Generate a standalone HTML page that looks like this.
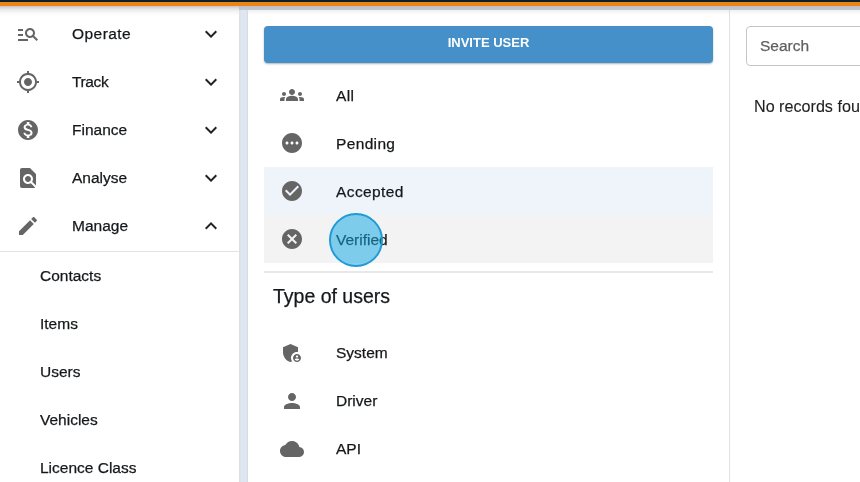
<!DOCTYPE html>
<html><head><meta charset="utf-8">
<style>
*{box-sizing:border-box;margin:0;padding:0}
html,body{width:860px;height:482px;overflow:hidden;background:#dee7f1;font-family:"Liberation Sans",sans-serif;color:#15181b}
.abs{position:absolute}
#topdark{left:0;top:0;width:860px;height:2px;background:#0e2028}
#toporange{left:0;top:2px;width:860px;height:4px;background:#ee8416}
#side{left:0;top:6px;width:239px;height:476px;background:#fff}
#sep{left:0;top:251px;width:239px;height:1px;background:#e3e3e3}
.icon{position:absolute;width:24px;height:24px;fill:#656565}
.chev{position:absolute;width:24px;height:24px;fill:#222}
.st{position:absolute;font-size:15.5px;white-space:nowrap;line-height:20px;will-change:transform;-webkit-text-stroke:0.25px currentColor}
#main{left:248px;top:10px;width:481px;height:472px;background:#fff}
#vline{left:729px;top:6px;width:1px;height:476px;background:#e2e2e2}
#right{left:730px;top:10px;width:130px;height:472px;background:#fff}
#btn{left:264px;top:26px;width:449px;height:37px;background:#4590c8;border-radius:4px;box-shadow:0 1px 2px rgba(0,0,0,.3);color:#fff;font-weight:bold;font-size:13px;text-align:center;line-height:34px;will-change:transform}
#acc{left:264px;top:167px;width:449px;height:48px;background:#eff4fb}
#ver{left:264px;top:215px;width:449px;height:48px;background:#f3f3f3}
#div2{left:264px;top:271px;width:449px;height:2px;background:#e8e8e8}
#search{left:746px;top:26px;width:130px;height:40px;border:1px solid #c6c6c6;border-radius:4px;background:#fff}
#strip{left:239px;top:6px;width:621px;height:4px;background:linear-gradient(#bdc0c7,#c4c7ce)}
#shadow2{left:248px;top:10px;width:612px;height:5px;background:linear-gradient(rgba(0,0,0,.06),rgba(0,0,0,0))}
#shadow{left:0;top:6px;width:239px;height:10px;background:linear-gradient(rgba(0,0,0,.22),rgba(0,0,0,.1) 30%,rgba(0,0,0,.03) 65%,rgba(0,0,0,0))}
#circle{left:329px;top:212.5px;width:54px;height:54px;border-radius:50%;background:rgba(20,168,228,.52);border:2.2px solid #1f9ad6}
</style></head><body>
<div class="abs" id="side"></div>
<div class="abs" style="left:239px;top:6px;width:1px;height:476px;background:#dcdfe4"></div><div class="abs" style="left:240px;top:6px;width:1px;height:476px;background:#dde3ea"></div><div class="abs" style="left:247px;top:6px;width:1px;height:476px;background:#d5dbe4"></div>
<div class="abs" id="main"></div>
<div class="abs" id="right"></div>
<div class="abs" id="vline"></div>
<div class="abs" id="sep"></div>

<!-- sidebar -->
<svg class="icon" style="left:16px;top:22px" viewBox="0 0 24 24"><path d="M7 9H2V7h5v2zm0 3H2v2h5v-2zm13.59 7l-3.83-3.830c-.8.52-1.74.83-2.76.83-2.76 0-5-2.24-5-5s2.240-5 5-5 5 2.24 5 5c0 1.020-.31 1.96-.83 2.75L22 17.59 20.59 19zM17 11c0-1.65-1.35-3-3-3s-3 1.35-3 3 1.35 3 3 3 3-1.35 3-3zM2 19h10v-2H2v2z"/></svg>
<svg class="icon" style="left:16px;top:70px" viewBox="0 0 24 24"><path d="M12 8c-2.21 0-4 1.79-4 4s1.79 4 4 4 4-1.79 4-4-1.79-4-4-4zm8.94 3c-.46-4.17-3.77-7.48-7.94-7.94V1h-2v2.06C6.83 3.52 3.52 6.83 3.06 11H1v2h2.06c.46 4.17 3.77 7.48 7.94 7.94V23h2v-2.06c4.17-.46 7.48-3.77 7.94-7.94H23v-2h-2.06zM12 19c-3.87 0-7-3.13-7-7s3.13-7 7-7 7 3.13 7 7-3.13 7-7 7z"/></svg>
<svg class="icon" style="left:16px;top:118px" viewBox="0 0 24 24"><path d="M12 2C6.48 2 2 6.48 2 12s4.48 10 10 10 10-4.48 10-10S17.52 2 12 2zm1.41 16.09V20h-2.67v-1.93c-1.71-.36-3.16-1.46-3.27-3.4h1.96c.1 1.05.82 1.87 2.65 1.87 1.96 0 2.4-.98 2.4-1.59 0-.83-.44-1.61-2.67-2.14-2.48-.6-4.18-1.62-4.18-3.670 0-1.72 1.39-2.84 3.11-3.21V4h2.67v1.95c1.86.45 2.79 1.86 2.85 3.39H14.3c-.05-1.110-.64-1.87-2.22-1.87-1.5 0-2.4.68-2.4 1.64 0 .84.65 1.39 2.67 1.91s4.18 1.39 4.18 3.91c-.01 1.83-1.38 2.83-3.12 3.16z"/></svg>
<svg class="icon" style="left:16px;top:166px" viewBox="0 0 24 24"><path d="M20 19.59V8l-6-6H6c-1.1 0-1.99.9-1.99 2L4 20c0 1.1.89 2 1.99 2H18c.45 0 .85-.15 1.19-.38l-4.43-4.43c-.8.52-1.74.81-2.76.81-2.76 0-5-2.24-5-5s2.24-5 5-5 5 2.24 5 5c0 1.02-.31 1.96-.83 2.75L20 19.59zM9 13c0 1.66 1.34 3 3 3s3-1.34 3-3-1.34-3-3-3-3 1.34-3 3z"/></svg>
<svg class="icon" style="left:16px;top:214px" viewBox="0 0 24 24"><path d="M3 17.25V21h3.75L17.81 9.94l-3.75-3.75L3 17.25zM20.71 7.04c.39-.39.39-1.02 0-1.41l-2.34-2.34c-.39-.39-1.02-.39-1.41 0l-1.83 1.83 3.75 3.75 1.83-1.83z"/></svg>

<div class="st" style="left:72px;top:24px;letter-spacing:.45px">Operate</div>
<div class="st" style="left:72px;top:72px;letter-spacing:-.35px">Track</div>
<div class="st" style="left:72px;top:120px">Finance</div>
<div class="st" style="left:72px;top:168px">Analyse</div>
<div class="st" style="left:72px;top:216px">Manage</div>

<svg class="chev" style="left:199px;top:22px" viewBox="0 0 24 24"><path d="M16.59 8.59L12 13.17 7.41 8.59 6 10l6 6 6-6z"/></svg>
<svg class="chev" style="left:199px;top:70px" viewBox="0 0 24 24"><path d="M16.59 8.59L12 13.17 7.41 8.59 6 10l6 6 6-6z"/></svg>
<svg class="chev" style="left:199px;top:118px" viewBox="0 0 24 24"><path d="M16.59 8.59L12 13.17 7.41 8.59 6 10l6 6 6-6z"/></svg>
<svg class="chev" style="left:199px;top:166px" viewBox="0 0 24 24"><path d="M16.59 8.59L12 13.17 7.41 8.59 6 10l6 6 6-6z"/></svg>
<svg class="chev" style="left:199px;top:214px" viewBox="0 0 24 24"><path d="M12 8l-6 6 1.41 1.41L12 10.83l4.59 4.58L18 14z"/></svg>

<div class="st" style="left:40px;top:265.5px">Contacts</div>
<div class="st" style="left:40px;top:313.5px">Items</div>
<div class="st" style="left:40px;top:362px">Users</div>
<div class="st" style="left:40px;top:410px">Vehicles</div>
<div class="st" style="left:40px;top:458px">Licence Class</div>

<!-- main -->
<div class="abs" id="btn">INVITE USER</div>
<div class="abs" id="acc"></div>
<div class="abs" id="ver"></div>
<div class="abs" id="div2"></div>

<svg class="icon" style="left:280px;top:83px" viewBox="0 0 24 24"><path d="M12 12.75c1.63 0 3.07.39 4.24.9 1.08.48 1.76 1.56 1.76 2.73V18H6v-1.61c0-1.18.68-2.26 1.76-2.73 1.17-.52 2.61-.91 4.24-.91zM4 13c1.1 0 2-.9 2-2s-.9-2-2-2-2 .9-2 2 .9 2 2 2zm1.13 1.1c-.37-.06-.74-.1-1.13-.1-.99 0-1.93.21-2.78.58C.48 14.9 0 15.62 0 16.43V18h4.5v-1.61c0-.83.23-1.61.63-2.29zM20 13c1.1 0 2-.9 2-2s-.9-2-2-2-2 .9-2 2 .9 2 2 2zm4 3.43c0-.81-.48-1.530-1.22-1.85-.85-.37-1.79-.58-2.78-.58-.39 0-.76.04-1.13.1.4.68.63 1.46.63 2.29V18H24v-1.57zM12 6c1.66 0 3 1.34 3 3s-1.34 3-3 3-3-1.34-3-3 1.34-3 3-3z"/></svg>
<svg class="icon" style="left:280px;top:131px" viewBox="0 0 24 24"><path d="M12 2C6.48 2 2 6.48 2 12s4.48 10 10 10 10-4.48 10-10S17.52 2 12 2zM7 13.5c-.83 0-1.5-.67-1.5-1.5s.67-1.5 1.5-1.5 1.5.67 1.5 1.5-.67 1.5-1.5 1.5zm5 0c-.83 0-1.5-.67-1.5-1.5s.67-1.5 1.5-1.5 1.5.67 1.5 1.5-.67 1.5-1.5 1.5zm5 0c-.83 0-1.5-.67-1.5-1.5s.67-1.5 1.5-1.5 1.5.67 1.5 1.5-.67 1.5-1.5 1.5z"/></svg>
<svg class="icon" style="left:280px;top:179px" viewBox="0 0 24 24"><path d="M12 2C6.48 2 2 6.48 2 12s4.48 10 10 10 10-4.48 10-10S17.52 2 12 2zm-2 15l-5-5 1.41-1.41L10 14.17l7.59-7.59L19 8l-9 9z"/></svg>
<svg class="icon" style="left:280px;top:227px" viewBox="0 0 24 24"><path d="M12 2C6.47 2 2 6.47 2 12s4.47 10 10 10 10-4.47 10-10S17.53 2 12 2zm5 13.59L15.590 17 12 13.41 8.41 17 7 15.59 10.59 12 7 8.41 8.41 7 12 10.59 15.59 7 17 8.41 13.41 12 17 15.59z"/></svg>

<div class="st" style="left:336px;top:85.5px;letter-spacing:.4px">All</div>
<div class="st" style="left:336px;top:133.5px;letter-spacing:.35px">Pending</div>
<div class="st" style="left:336px;top:181.5px;letter-spacing:.4px">Accepted</div>
<div class="st" style="left:336px;top:229.5px">Verified</div>

<div class="st" style="left:273px;top:284px;font-size:19.5px;line-height:24px">Type of users</div>

<svg class="icon" style="left:280px;top:341px" viewBox="0 0 24 24"><path d="M17 11c.34 0 .67.04 1 .09V6.27L10.5 3 3 6.27v4.91c0 4.54 3.2 8.79 7.5 9.82.55-.13 1.08-.32 1.6-.55-.69-.98-1.1-2.17-1.1-3.45 0-3.31 2.69-6 6-6z"/><path d="M17 13c-2.21 0-4 1.79-4 4s1.79 4 4 4 4-1.79 4-4-1.79-4-4-4zm0 1.38c.62 0 1.12.51 1.12 1.12s-.51 1.12-1.12 1.12-1.12-.51-1.12-1.12.5-1.12 1.12-1.12zm0 5.37c-.93 0-1.74-.46-2.24-1.17.05-.72 1.51-1.08 2.24-1.08s2.19.36 2.24 1.08c-.5.71-1.31 1.17-2.24 1.17z"/></svg>
<svg class="icon" style="left:280px;top:389px" viewBox="0 0 24 24"><path d="M12 12c2.21 0 4-1.79 4-4s-1.79-4-4-4-4 1.79-4 4 1.79 4 4 4zm0 2c-2.67 0-8 1.34-8 4v2h16v-2c0-2.66-5.330-4-8-4z"/></svg>
<svg class="icon" style="left:280px;top:437px" viewBox="0 0 24 24"><path d="M19.35 10.04C18.67 6.59 15.64 4 12 4 9.11 4 6.6 5.64 5.35 8.04 2.34 8.36 0 10.91 0 14c0 3.31 2.69 6 6 6h13c2.76 0 5-2.24 5-5 0-2.64-2.05-4.78-4.65-4.96z"/></svg>

<div class="st" style="left:336px;top:343px">System</div>
<div class="st" style="left:336px;top:391px">Driver</div>
<div class="st" style="left:336px;top:439px">API</div>

<!-- right -->
<div class="abs" id="search"></div>
<div class="st" style="left:760px;top:36px;color:#5f5f5f;font-size:15.5px">Search</div>
<div class="st" style="left:754px;top:95.5px;color:#1e1e1e;font-size:16.15px;-webkit-text-stroke:0.1px currentColor">No records fou</div>

<div class="abs" id="circle"></div>

<div class="abs" id="shadow"></div><div class="abs" id="strip"></div><div class="abs" id="shadow2"></div>
<div class="abs" id="topdark"></div>
<div class="abs" id="toporange"></div>
</body></html>
